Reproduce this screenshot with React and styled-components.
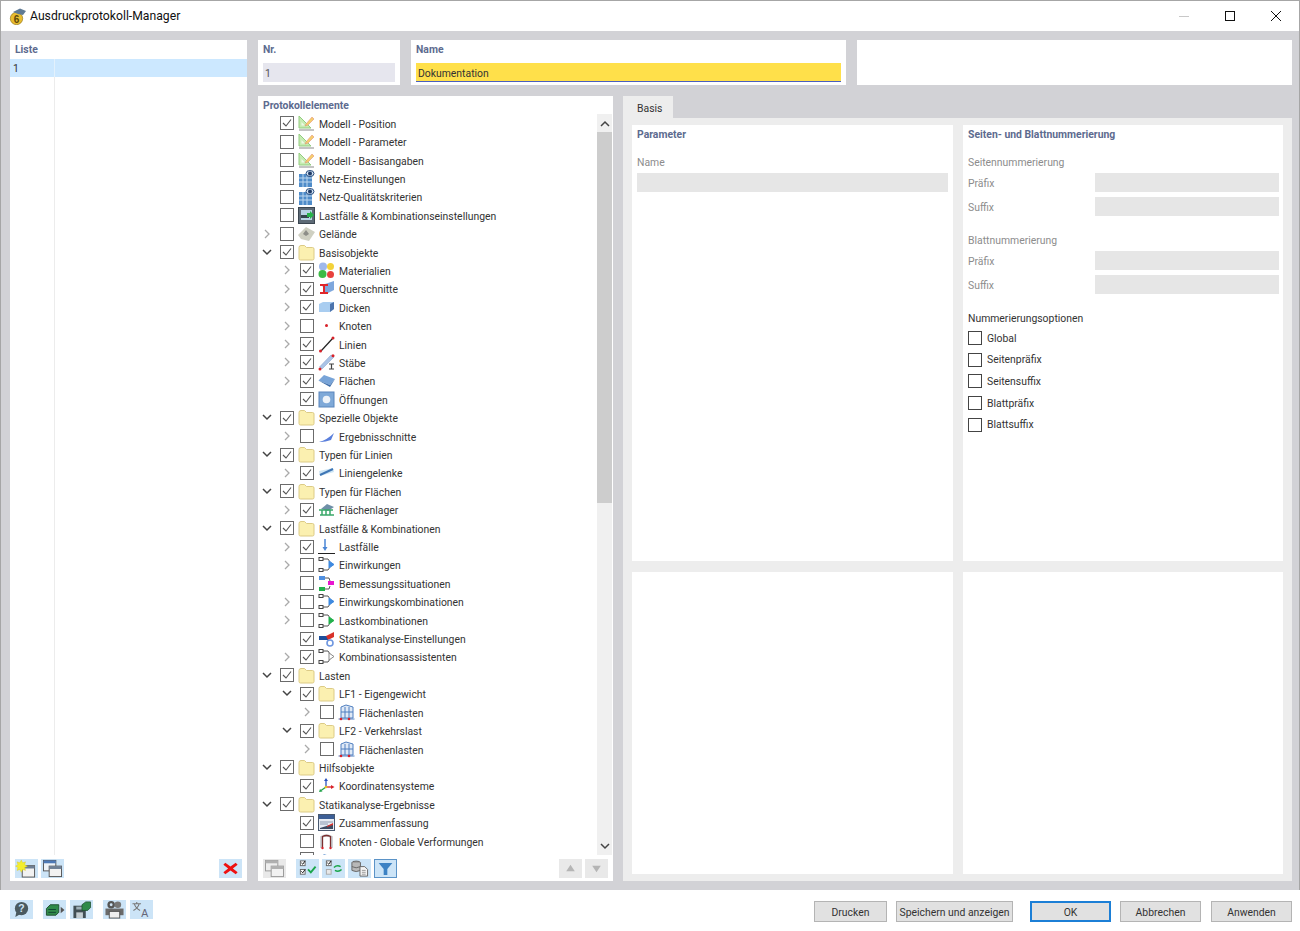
import React from "react";
import styled, { createGlobalStyle } from "styled-components";

const GlobalStyle = createGlobalStyle`
html, body { margin: 0; padding: 0; background: #fff; }
body { font-family: Roboto, "Open Sans", "Liberation Sans", sans-serif; font-size: 10.4px; color: #2f2f2f; }
* { box-sizing: border-box; }
`;

const treeRows = [
  { d: 0, c: 1, i: "model", t: "Modell - Position" },
  { d: 0, i: "model", t: "Modell - Parameter" },
  { d: 0, i: "model", t: "Modell - Basisangaben" },
  { d: 0, i: "mesh", t: "Netz-Einstellungen" },
  { d: 0, i: "mesh", t: "Netz-Qualitätskriterien" },
  { d: 0, i: "loadcfg", t: "Lastfälle & Kombinationseinstellungen" },
  { d: 0, e: ">", i: "terrain", t: "Gelände" },
  { d: 0, e: "v", c: 1, i: "folder", t: "Basisobjekte" },
  { d: 1, e: ">", c: 1, i: "materials", t: "Materialien" },
  { d: 1, e: ">", c: 1, i: "section", t: "Querschnitte" },
  { d: 1, e: ">", c: 1, i: "thickness", t: "Dicken" },
  { d: 1, e: ">", i: "node", t: "Knoten" },
  { d: 1, e: ">", c: 1, i: "line", t: "Linien" },
  { d: 1, e: ">", c: 1, i: "member", t: "Stäbe" },
  { d: 1, e: ">", c: 1, i: "surface", t: "Flächen" },
  { d: 1, c: 1, i: "opening", t: "Öffnungen" },
  { d: 0, e: "v", c: 1, i: "folder", t: "Spezielle Objekte" },
  { d: 1, e: ">", i: "cut", t: "Ergebnisschnitte" },
  { d: 0, e: "v", c: 1, i: "folder", t: "Typen für Linien" },
  { d: 1, e: ">", c: 1, i: "hinge", t: "Liniengelenke" },
  { d: 0, e: "v", c: 1, i: "folder", t: "Typen für Flächen" },
  { d: 1, e: ">", c: 1, i: "support", t: "Flächenlager" },
  { d: 0, e: "v", c: 1, i: "folder", t: "Lastfälle & Kombinationen" },
  { d: 1, e: ">", c: 1, i: "loadcase", t: "Lastfälle" },
  { d: 1, e: ">", i: "comboBlue", t: "Einwirkungen" },
  { d: 1, i: "design", t: "Bemessungssituationen" },
  { d: 1, e: ">", i: "comboBlue", t: "Einwirkungskombinationen" },
  { d: 1, e: ">", i: "comboGreen", t: "Lastkombinationen" },
  { d: 1, c: 1, i: "static", t: "Statikanalyse-Einstellungen" },
  { d: 1, e: ">", c: 1, i: "comboWhite", t: "Kombinationsassistenten" },
  { d: 0, e: "v", c: 1, i: "folder", t: "Lasten" },
  { d: 1, e: "v", c: 1, i: "folder", t: "LF1 - Eigengewicht" },
  { d: 2, e: ">", i: "surfload", t: "Flächenlasten" },
  { d: 1, e: "v", c: 1, i: "folder", t: "LF2 - Verkehrslast" },
  { d: 2, e: ">", i: "surfload", t: "Flächenlasten" },
  { d: 0, e: "v", c: 1, i: "folder", t: "Hilfsobjekte" },
  { d: 1, c: 1, i: "coord", t: "Koordinatensysteme" },
  { d: 0, e: "v", c: 1, i: "folder", t: "Statikanalyse-Ergebnisse" },
  { d: 1, c: 1, i: "summary", t: "Zusammenfassung" },
  { d: 1, i: "deform", t: "Knoten - Globale Verformungen" },
  { d: 1, i: "surface", t: "" },
];

const optionLabels = ["Global", "Seitenpräfix", "Seitensuffix", "Blattpräfix", "Blattsuffix"];

function comboShape(color) {
  return (
    <>
      <path d="M3 3h7l2 3M3 14h7l2-3" fill="none" stroke="#555" />
      <rect x="1" y="1.5" width="4" height="3" fill="#fff" stroke="#444" />
      <rect x="1" y="12.5" width="4" height="3" fill="#fff" stroke="#444" />
      <path d="M11 5l5 3.5-5 3.5z" fill={color} stroke={color === "#fff" ? "#888" : color} />
    </>
  );
}

// kleine Symbole im Baum
const iconShapes = {
  model: (
    <>
      <path d="M1 1v12h12z" fill="#c6ecb2" stroke="#93cc80" />
      <path d="M3.5 7v3.5h3.5z" fill="#eef9e6" />
      <path d="M8 9l6-7 2 2-6 6-3 1z" fill="#f6cf6c" stroke="#e0927a" strokeWidth=".6" />
      <rect x="1" y="14" width="15" height="2" fill="#c4c4c4" />
    </>
  ),
  mesh: (
    <>
      <rect x="1" y="4" width="13" height="13" fill="#4f8cc9" />
      <path d="M5 4v13M9 4v13M1 8h13M1 12h13" stroke="#bcd6ee" />
      <ellipse cx="12" cy="3.5" rx="4" ry="3" fill="#cfe0f2" stroke="#2b4f80" />
      <circle cx="12" cy="3.5" r="2" fill="#1e3a66" />
    </>
  ),
  loadcfg: (
    <>
      <rect x="0.5" y="0.5" width="16" height="16" fill="#5d6a76" stroke="#3b4650" />
      <rect x="3" y="3" width="11" height="10" fill="#b8d3e6" />
      <rect x="3" y="8" width="8" height="3" fill="#35464f" />
      <path d="M9 6h3V4l4 4-4 4v-2H9z" fill="#28b24b" />
    </>
  ),
  terrain: (
    <>
      <path d="M0 10l8-8 9 5-6 9-8-2z" fill="#cfd0c2" />
      <path d="M5 9l3-4 3 4-3 2z" fill="#8d8e88" />
    </>
  ),
  folder: (
    <path
      d="M1 3.500q0-2 2-2h3.500l2 2h6q1.500 0 1.500 1.500v9.500q0 1.500-1.500 1.500h-12q-1.500 0-1.500-1.500z"
      fill="#fbf0b0"
      stroke="#dccb86"
    />
  ),
  materials: (
    <>
      <circle cx="5" cy="4.500" r="4" fill="#9fb8ea" />
      <circle cx="12.500" cy="4.500" r="3.500" fill="#f3d23a" />
      <circle cx="4.500" cy="12" r="4" fill="#3cbb45" />
      <circle cx="12.500" cy="12.500" r="3.500" fill="#e8413d" />
    </>
  ),
  section: (
    <>
      <path d="M4 5l12-4v9L8 14z" fill="#7ea7dd" />
      <path d="M2 4h8v2H7v6h3v2H2v-2h3V6H2z" fill="#e0262a" />
    </>
  ),
  thickness: (
    <>
      <path d="M1 5l4-2h11v7l-4 3H1z" fill="#a9cdf0" />
      <path d="M12 5l4-2v7l-4 3z" fill="#4c74ad" />
    </>
  ),
  node: <circle cx="8.500" cy="8.500" r="1.500" fill="#d8222a" />,
  line: (
    <>
      <path d="M3 15L15 2" stroke="#222" strokeWidth="1.200" />
      <circle cx="2.500" cy="15" r="1.500" fill="#d8222a" />
      <circle cx="15" cy="2" r="1.500" fill="#d8222a" />
    </>
  ),
  member: (
    <>
      <path d="M1.500 13L13 1l3 2L4 15z" fill="#aac3e6" stroke="#7f9cc8" strokeWidth=".5" />
      <circle cx="2" cy="15" r="1.500" fill="#d8222a" />
      <circle cx="15" cy="1.800" r="1.500" fill="#d8222a" />
      <path d="M11 10h5M11 15h5M13.500 10v5" stroke="#444" strokeWidth="1.200" />
    </>
  ),
  surface: (
    <>
      <path d="M0.500 8.500L6 3l11 4-5 6z" fill="#78a4d8" />
      <path d="M0.500 8.500L12 13l5-6-5 8z" fill="#3f6ea9" />
    </>
  ),
  opening: (
    <>
      <rect x="1" y="1" width="15" height="15" fill="#7fa9d8" stroke="#5b86bd" />
      <circle cx="8.500" cy="8.500" r="3.800" fill="#eef3f9" />
    </>
  ),
  cut: <path d="M1 14q8-2 15-9l-3 7q-6 2-10 2z" fill="#5a7fdc" />,
  hinge: (
    <>
      <path d="M1 7l14-3 1 4-14 4z" fill="#cfe6f5" />
      <path d="M2 11l13-6" stroke="#3f76b5" strokeWidth="2" />
    </>
  ),
  support: (
    <>
      <path d="M3 8l6-5 7 3-6 4z" fill="#6f8fa8" />
      <path d="M1 9h14M2 14h14M4 9v5M8 9v5M12 9v5" stroke="#3aa86a" strokeWidth="1.500" />
    </>
  ),
  loadcase: (
    <>
      <path d="M7 1v10" stroke="#4a86d6" strokeWidth="1.500" />
      <path d="M4.500 9L7 13l2.500-4z" fill="#4a86d6" />
      <path d="M0 15.500h17" stroke="#222" />
    </>
  ),
  comboBlue: comboShape("#3f8ae0"),
  comboGreen: comboShape("#22b14c"),
  comboWhite: comboShape("#fff"),
  design: (
    <>
      <path d="M6 3h5l1 3M6 14h5l1-3" fill="none" stroke="#555" />
      <rect x="1" y="1" width="6" height="4" fill="#4f8fe0" />
      <rect x="1" y="12" width="6" height="4" fill="#22b14c" />
      <rect x="10" y="6" width="6" height="4" fill="#e815d0" />
    </>
  ),
  static: (
    <>
      <path d="M1 6h9v4H1z" fill="#1d4f9c" />
      <path d="M8 6l8-4v5l-6 3z" fill="#d8322a" />
      <circle cx="12" cy="13" r="3" fill="none" stroke="#6f97e0" strokeWidth="1.600" />
    </>
  ),
  surfload: (
    <>
      <path d="M3 3l5-2 7 2v11H3z" fill="#dfe9f6" stroke="#4f7fc0" />
      <path d="M7 3v11M11 3v11M3 8h12" stroke="#4f7fc0" />
      <path d="M0.500 15h16" stroke="#4f7fc0" />
      <circle cx="3" cy="15" r="1.300" fill="#d8222a" />
      <circle cx="11" cy="15" r="1.300" fill="#d8222a" />
    </>
  ),
  coord: (
    <>
      <path d="M8 10V3" stroke="#2a52c0" strokeWidth="1.300" />
      <path d="M6 4l2-3 2 3z" fill="#2a52c0" />
      <path d="M8 10h6" stroke="#d8222a" strokeWidth="1.300" />
      <path d="M13 8l3.500 2-3.500 2z" fill="#d8222a" />
      <path d="M8 10l-5 3.500" stroke="#22a34a" strokeWidth="1.300" />
      <path d="M1 15l1-3 2.500 2.500z" fill="#22a34a" />
      <circle cx="8" cy="10" r="1.300" fill="#e8c020" />
    </>
  ),
  summary: (
    <>
      <rect x="0.500" y="0.500" width="16" height="16" fill="#e8edf4" stroke="#4a5a70" />
      <rect x="1" y="1" width="15" height="4" fill="#3d5f96" />
      <path d="M2 8h13M2 10h8" stroke="#8c9bb0" />
      <path d="M2 14l13-4v5H2z" fill="#3d4c63" />
      <path d="M9 12l6-3v2l-6 2z" fill="#d8322a" />
    </>
  ),
  deform: (
    <>
      <path d="M3.500 15V4q5-3 10 0v11" fill="none" stroke="#c8cacf" strokeWidth="2.600" />
      <path d="M4.500 14V3.500q4-2 8 0V14" fill="none" stroke="#7b2f2f" strokeWidth="1.300" />
      <circle cx="4.500" cy="15" r="1.200" fill="#d8222a" />
      <circle cx="12.500" cy="15" r="1.200" fill="#d8222a" />
    </>
  ),
};

const toolShapes = {
  newWin: (
    <>
      <rect x="7" y="7" width="13" height="12" fill="#f2f2f2" stroke="#555" />
      <rect x="7" y="7" width="13" height="3" fill="#6e7f94" />
      <path d="M6 1l1.500 3 3-1-1 3 3 1.500-3 1.500 1 3-3-1L6 14l-1.500-3-3 1 1-3L0 7.500 2.500 6l-1-3 3 1z" fill="#f4ee2e" stroke="#d4c420" strokeWidth=".4" />
    </>
  ),
  copyWin: (
    <>
      <rect x="2" y="1.500" width="13" height="11" fill="#eef3f8" stroke="#555" />
      <rect x="2" y="1.500" width="13" height="3" fill="#4d79b6" />
      <rect x="8" y="7.500" width="13" height="11" fill="#f2f2f2" stroke="#555" />
      <rect x="8" y="7.500" width="13" height="3" fill="#6e7f94" />
    </>
  ),
  copyWinOff: (
    <>
      <rect x="2" y="1.500" width="13" height="11" fill="#eee" stroke="#999" />
      <rect x="2" y="1.500" width="13" height="3" fill="#b0b0b0" />
      <rect x="8" y="7.500" width="13" height="11" fill="#f2f2f2" stroke="#999" />
      <rect x="8" y="7.500" width="13" height="3" fill="#b0b0b0" />
    </>
  ),
  cross: <path d="M6 4l5.500 4L17 4l2 2-5 4 5 4-2 2-5.500-4L6 16l-2-2 5-4-5-4z" fill="#ee1111" />,
  checkAll: (
    <>
      <rect x="4" y="2" width="5" height="5" fill="#fff" stroke="#666" />
      <rect x="4" y="11" width="5" height="5" fill="#fff" stroke="#666" />
      <path d="M5 4l1.500 1.500L9 2M5 13l1.500 1.500L9 11" fill="none" stroke="#111" />
      <path d="M12 11l3 3 5-6" fill="none" stroke="#1aa64a" strokeWidth="2" />
    </>
  ),
  checkSwap: (
    <>
      <rect x="4" y="2" width="5" height="5" fill="#fff" stroke="#666" />
      <rect x="4" y="11" width="5" height="5" fill="#e8e8e8" stroke="#aaa" />
      <path d="M5 4l1.500 1.500L9 2" fill="none" stroke="#111" />
      <path d="M12 9q3-3 7-1M20 11q-3 3-7 1" fill="none" stroke="#1aa64a" strokeWidth="1.600" />
    </>
  ),
  docs: (
    <>
      <ellipse cx="8" cy="4" rx="4.500" ry="1.800" fill="#9a9a9a" stroke="#666" />
      <path d="M3.500 4v8q4.500 2.500 9 0V4" fill="#b8b8b8" stroke="#666" />
      <path d="M3.500 8q4.500 2.500 9 0" fill="none" stroke="#666" />
      <path d="M12 8h5l3 3v7h-8z" fill="#f4f4f4" stroke="#666" />
      <path d="M14 12h4M14 14h4M14 16h4" stroke="#999" />
    </>
  ),
  filter: <path d="M4 4h15l-5.500 6.500V17h-4v-6.500z" fill="#3c82c4" />,
  up: <path d="M11.500 6l-4.500 7h9z" fill="#b5b5b5" />,
  down: <path d="M11.500 14l-4.500-7h9z" fill="#b5b5b5" />,
  help: (
    <>
      <circle cx="11.500" cy="9" r="7" fill="#4a5a60" />
      <path d="M6 13l-1 5 5-3z" fill="#4a5a60" />
      <text x="11.500" y="13" fontSize="11" fontWeight="700" fill="#cfe4f5" textAnchor="middle" fontFamily="Liberation Sans, sans-serif">?</text>
    </>
  ),
  sheets: (
    <>
      <path d="M3 9l4-4h9v8l-3 3H3z" fill="#2f8a4a" stroke="#1f4f30" />
      <path d="M5 10h8M5 13h8" stroke="#143" />
      <path d="M18 7l4 3.500-4 3.500z" fill="#555" />
    </>
  ),
  saveSheet: (
    <>
      <rect x="3" y="6" width="13" height="13" fill="#414f55" />
      <rect x="6" y="7" width="6" height="3" fill="#9fb0b8" />
      <rect x="6" y="13" width="7" height="6" fill="#c3cdd2" />
      <path d="M12 5l4-3h5v6l-3 3h-6z" fill="#2f8a4a" stroke="#1f4f30" strokeWidth=".8" />
    </>
  ),
  printer: (
    <>
      <circle cx="8" cy="5" r="4" fill="#555" />
      <circle cx="15" cy="5" r="3.500" fill="#777" />
      <circle cx="8" cy="5" r="1.500" fill="#cfe4f5" />
      <rect x="2" y="9" width="19" height="7" fill="#6a6a6a" />
      <rect x="6" y="12" width="11" height="7" fill="#eee" stroke="#555" />
    </>
  ),
  translate: (
    <>
      <path d="M2 4h9M6.500 2v2M4 4q1 4 6 7M9 4q-1 4-6 7" fill="none" stroke="#777" strokeWidth="1.100" />
      <text x="15" y="18" fontSize="11" fill="#667" textAnchor="middle" fontFamily="Liberation Sans, sans-serif">A</text>
    </>
  ),
};

function TreeIcon({ kind }) {
  return <IconSvg viewBox="0 0 17 17">{iconShapes[kind]}</IconSvg>;
}

function Tool({ icon, $look }) {
  return (
    <ToolButton $look={$look}>
      <svg width="23" height="19" viewBox="0 0 23 20">{toolShapes[icon]}</svg>
    </ToolButton>
  );
}

function CheckBox({ checked, $dark }) {
  return (
    <Box $dark={$dark}>
      {checked && (
        <svg width="12" height="12" viewBox="0 0 12 12">
          <path d="M2 6l3 3 5-6.500" fill="none" stroke="#555" strokeWidth="1.100" />
        </svg>
      )}
    </Box>
  );
}

function Expander({ type }) {
  if (type === "v") {
    return (
      <ExpanderSlot>
        <svg width="10" height="7" viewBox="0 0 10 7">
          <path d="M1 1l4 4 4-4" fill="none" stroke="#444" strokeWidth="1.500" />
        </svg>
      </ExpanderSlot>
    );
  }
  if (type === ">") {
    return (
      <ExpanderSlot>
        <svg width="7" height="10" viewBox="0 0 7 10">
          <path d="M1 1l4 4-4 4" fill="none" stroke="#aaa" strokeWidth="1.300" />
        </svg>
      </ExpanderSlot>
    );
  }
  return <ExpanderSlot />;
}

export default function App() {
  return (
    <>
      <GlobalStyle />
      <Window>
        <TitleBar>
          <AppLogo viewBox="0 0 17 17">
            <circle cx="7.500" cy="10.500" r="6.200" fill="#e8bd30" stroke="#8a6c14" strokeWidth=".6" />
            <path d="M4 4l7-3.500 6 2.500-3 4-5-1z" fill="#5f7a94" />
            <text x="7.500" y="15" fontSize="10" fontWeight="700" fill="#5d4708" textAnchor="middle" fontFamily="Liberation Sans, sans-serif">6</text>
          </AppLogo>
          <TitleText>Ausdruckprotokoll-Manager</TitleText>
          <WinControls>
            <WinControl>
              <svg width="12" height="12" viewBox="0 0 12 12"><path d="M1 6.500h10" stroke="#c8c8c8" /></svg>
            </WinControl>
            <WinControl>
              <svg width="12" height="12" viewBox="0 0 12 12"><rect x="1.500" y="1.500" width="9" height="9" fill="none" stroke="#111" /></svg>
            </WinControl>
            <WinControl>
              <svg width="12" height="12" viewBox="0 0 12 12"><path d="M1 1l10 10M11 1L1 11" stroke="#111" /></svg>
            </WinControl>
          </WinControls>
        </TitleBar>

        <Content>
          <ListPanel>
            <PanelTitle>Liste</PanelTitle>
            <ListBody>
              <ListRow>1</ListRow>
            </ListBody>
            <PanelTools>
              <Tool icon="newWin" $look="on" />
              <Tool icon="copyWin" $look="on" />
              <Spacer />
              <Tool icon="cross" $look="on" />
            </PanelTools>
          </ListPanel>

          <MainColumn>
            <TopRow>
              <NrPanel>
                <PanelTitle>Nr.</PanelTitle>
                <NrField>1</NrField>
              </NrPanel>
              <NamePanel>
                <PanelTitle>Name</PanelTitle>
                <NameField>Dokumentation</NameField>
              </NamePanel>
              <NamePanel />
            </TopRow>

            <LowerRow>
              <TreePanel>
                <PanelTitle>Protokollelemente</PanelTitle>
                <TreeArea>
                  <TreeList>
                    {treeRows.map((row, i) => (
                      <TreeRow key={i} $depth={row.d}>
                        <Expander type={row.e} />
                        <CheckBox checked={row.c} />
                        <TreeIcon kind={row.i} />
                        <TreeLabel>{row.t}</TreeLabel>
                      </TreeRow>
                    ))}
                  </TreeList>
                  <ScrollBar>
                    <ScrollEnd>
                      <svg width="10" height="7" viewBox="0 0 10 7"><path d="M1 6l4-4 4 4" fill="none" stroke="#444" strokeWidth="1.500" /></svg>
                    </ScrollEnd>
                    <ScrollThumb />
                    <ScrollEnd>
                      <svg width="10" height="7" viewBox="0 0 10 7"><path d="M1 1l4 4 4-4" fill="none" stroke="#444" strokeWidth="1.500" /></svg>
                    </ScrollEnd>
                  </ScrollBar>
                </TreeArea>
                <PanelTools>
                  <Tool icon="copyWinOff" $look="off" />
                  <ToolGap />
                  <Tool icon="checkAll" $look="on" />
                  <Tool icon="checkSwap" $look="on" />
                  <Tool icon="docs" $look="on" />
                  <Tool icon="filter" $look="active" />
                  <Spacer />
                  <Tool icon="up" $look="off" />
                  <Tool icon="down" $look="off" />
                </PanelTools>
              </TreePanel>

              <TabArea>
                <TabStrip>
                  <Tab>Basis</Tab>
                </TabStrip>
                <TabBody>
                  <Card>
                    <CardTitle>Parameter</CardTitle>
                    <MutedLabel>Name</MutedLabel>
                    <WideField />
                  </Card>
                  <Card>
                    <CardTitle>Seiten- und Blattnummerierung</CardTitle>
                    <MutedLabel>Seitennummerierung</MutedLabel>
                    <FieldGrid>
                      <FieldName>Präfix</FieldName>
                      <GreyField />
                      <FieldName>Suffix</FieldName>
                      <GreyField />
                    </FieldGrid>
                    <MutedLabel $spaced>Blattnummerierung</MutedLabel>
                    <FieldGrid>
                      <FieldName>Präfix</FieldName>
                      <GreyField />
                      <FieldName>Suffix</FieldName>
                      <GreyField />
                    </FieldGrid>
                    <OptionsLabel>Nummerierungsoptionen</OptionsLabel>
                    {optionLabels.map((label) => (
                      <OptionRow key={label}>
                        <CheckBox $dark />
                        <span>{label}</span>
                      </OptionRow>
                    ))}
                  </Card>
                  <Card />
                  <Card />
                </TabBody>
              </TabArea>
            </LowerRow>
          </MainColumn>
        </Content>

        <BottomBar>
          <Tool icon="help" $look="on" />
          <BottomGap />
          <Tool icon="sheets" $look="on" />
          <Tool icon="saveSheet" $look="on" />
          <BottomGap />
          <Tool icon="printer" $look="on" />
          <Tool icon="translate" $look="on" />
          <Spacer />
          <DialogButton $w={73}>Drucken</DialogButton>
          <DialogButton $w={117} $ml={9}>Speichern und anzeigen</DialogButton>
          <DialogButton $w={81} $ml={17} $primary>OK</DialogButton>
          <DialogButton $w={81} $ml={9}>Abbrechen</DialogButton>
          <DialogButton $w={81} $ml={10}>Anwenden</DialogButton>
        </BottomBar>
      </Window>
    </>
  );
}

const Window = styled.div`
  width: 1300px;
  height: 931px;
  display: flex;
  flex-direction: column;
  overflow: hidden;
  background: #fff;
`;

const TitleBar = styled.div`
  height: 31px;
  flex: none;
  display: flex;
  align-items: center;
  padding-left: 8px;
  background: #fff;
  border: 1px solid #a6a6a6;
  border-bottom: 0;
`;

const AppLogo = styled.svg`
  width: 17px;
  height: 17px;
  flex: none;
`;

const TitleText = styled.div`
  margin-left: 4px;
  font-size: 12.2px;
  color: #111;
`;

const WinControls = styled.div`
  margin-left: auto;
  display: flex;
`;

const WinControl = styled.div`
  width: 46px;
  height: 30px;
  display: flex;
  align-items: center;
  justify-content: center;
`;

const Content = styled.div`
  height: 859px;
  flex: none;
  display: flex;
  gap: 11px;
  padding: 9px 7px 9px 9px;
  background: #d2d2d6;
  border-left: 1px solid #a6a6a6;
  border-right: 1px solid #a6a6a6;
`;

const Panel = styled.div`
  background: #fff;
  display: flex;
  flex-direction: column;
`;

const ListPanel = styled(Panel)`
  width: 237px;
  flex: none;
`;

const PanelTitle = styled.div`
  height: 18px;
  line-height: 20px;
  padding-left: 5px;
  font-weight: 700;
  color: #5d6b8f;
  flex: none;
`;

const ListBody = styled.div`
  height: 796px;
  margin-top: 1px;
  flex: none;
  background: linear-gradient(#ececec, #ececec) 44px 0 / 1px 100% no-repeat;
`;

const ListRow = styled.div`
  height: 18px;
  line-height: 19px;
  padding-left: 3px;
  background: linear-gradient(#e3f1fc, #e3f1fc) 44px 0 / 1px 100% no-repeat, #cce8ff;
  color: #333;
`;

const PanelTools = styled.div`
  display: flex;
  align-items: center;
  gap: 3px;
  padding: 4px 5px 3px;
  flex: none;
`;

const Spacer = styled.div`
  flex: 1;
`;

const ToolGap = styled.div`
  width: 4px;
`;

const ToolButton = styled.div`
  width: 23px;
  height: 19px;
  flex: none;
  display: flex;
  align-items: center;
  justify-content: center;
  overflow: hidden;
  background: ${(p) => (p.$look === "off" ? "#e9e9e9" : "#cce4f7")};
  border: ${(p) => (p.$look === "active" ? "1px solid #5b93c7" : "0")};
`;

const MainColumn = styled.div`
  flex: 1;
  display: flex;
  flex-direction: column;
  gap: 11px;
`;

const TopRow = styled.div`
  height: 45px;
  display: flex;
  gap: 11px;
  flex: none;
`;

const NrPanel = styled(Panel)`
  width: 142px;
  flex: none;
`;

const NamePanel = styled(Panel)`
  width: 435px;
  flex: none;
`;

const NrField = styled.div`
  height: 19px;
  margin: 5px 5px 0;
  padding-left: 2px;
  line-height: 21px;
  background: #e6e6ee;
  color: #555;
`;

const NameField = styled.div`
  height: 19px;
  margin: 5px 5px 0;
  padding-left: 2px;
  line-height: 21px;
  background: #ffe04a;
  border-bottom: 1px solid #4a5fbf;
  color: #333;
`;

const LowerRow = styled.div`
  flex: 1;
  display: flex;
  gap: 10px;
  min-height: 0;
`;

const TreePanel = styled(Panel)`
  width: 355px;
  flex: none;
`;

const TreeArea = styled.div`
  height: 741px;
  flex: none;
  display: flex;
  padding-right: 1px;
`;

const TreeList = styled.div`
  flex: 1;
  overflow: hidden;
`;

const TreeRow = styled.div`
  height: 18.42px;
  display: flex;
  align-items: center;
  padding-left: ${(p) => p.$depth * 20}px;
  white-space: nowrap;
`;

const ExpanderSlot = styled.div`
  width: 22px;
  padding-right: 4px;
  flex: none;
  display: flex;
  align-items: center;
  justify-content: center;
`;

const Box = styled.div`
  width: 14px;
  height: 14px;
  flex: none;
  display: flex;
  align-items: center;
  justify-content: center;
  background: #fff;
  border: 1px solid ${(p) => (p.$dark ? "#444" : "#6b6b6b")};
`;

const IconSvg = styled.svg`
  width: 17px;
  height: 17px;
  flex: none;
  margin-left: 4px;
`;

const TreeLabel = styled.span`
  margin-left: 4px;
  padding-top: 2px;
  color: #333;
`;

const ScrollBar = styled.div`
  width: 15px;
  flex: none;
  display: flex;
  flex-direction: column;
  background: #f0f0f0;
`;

const ScrollEnd = styled.div`
  height: 18px;
  flex: none;
  display: flex;
  align-items: center;
  justify-content: center;
  &:last-child {
    margin-top: auto;
    align-items: flex-start;
    padding-top: 5px;
    height: 17px;
  }
`;

const ScrollThumb = styled.div`
  height: 371px;
  flex: none;
  background: #cdcdcd;
`;

const TabArea = styled.div`
  flex: 1;
  display: flex;
  flex-direction: column;
`;

const TabStrip = styled.div`
  height: 22px;
  flex: none;
  display: flex;
`;

const Tab = styled.div`
  width: 50px;
  line-height: 26px;
  padding-left: 14px;
  background: #ededed;
  color: #333;
`;

const TabBody = styled.div`
  flex: 1;
  display: grid;
  grid-template-columns: 321px 320px;
  grid-template-rows: 436px 302px;
  gap: 11px 10px;
  padding: 7px 9px;
  background: #ededed;
`;

const Card = styled.div`
  background: #fff;
  padding: 0 5px;
`;

const CardTitle = styled.div`
  height: 18px;
  line-height: 20px;
  font-weight: 700;
  color: #5d6b8f;
`;

const MutedLabel = styled.div`
  height: 18px;
  line-height: 20px;
  margin-top: ${(p) => (p.$spaced ? "15px" : "10px")};
  color: #8c8c8c;
`;

const GreyField = styled.div`
  height: 19px;
  background: #e6e6e6;
`;

const WideField = styled(GreyField)`
  margin-top: 2px;
`;

const FieldGrid = styled.div`
  display: grid;
  grid-template-columns: 127px 184px;
  row-gap: 5px;
  margin-top: 2px;
`;

const FieldName = styled.div`
  height: 19px;
  line-height: 21px;
  color: #8c8c8c;
`;

const OptionsLabel = styled.div`
  height: 18.3px;
  line-height: 20px;
  margin-top: 15px;
  color: #333;
`;

const OptionRow = styled.div`
  height: 21.67px;
  display: flex;
  align-items: center;
  gap: 5px;
  color: #333;
`;

const BottomBar = styled.div`
  flex: 1;
  display: flex;
  align-items: flex-start;
  gap: 4px;
  padding: 10px 8px 0 10px;
  background: #fff;
`;

const BottomGap = styled.div`
  width: 2px;
  flex: none;
`;

const DialogButton = styled.div`
  width: ${(p) => p.$w}px;
  height: 21px;
  line-height: 21px;
  padding-top: 1px;
  margin-left: ${(p) => p.$ml || 0}px;
  margin-right: -4px;
  margin-top: 1px;
  flex: none;
  display: flex;
  align-items: center;
  justify-content: center;
  white-space: nowrap;
  background: #e1e1e1;
  border: ${(p) => (p.$primary ? "2px solid #1c7fd6" : "1px solid #b4b4b4")};
  color: #333;
  &:last-child {
    margin-right: 0;
  }
`;
